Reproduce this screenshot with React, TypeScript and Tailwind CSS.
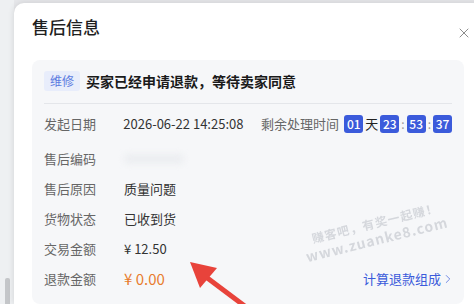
import { X, ChevronRight } from 'lucide-react';

const rows = [
  { label: "售后编码", value: "" },
  { label: "售后原因", value: "质量问题" },
  { label: "货物状态", value: "已收到货" },
  { label: "交易金额", value: "¥ 12.50" },
];

function TimeBox({ v }: { v: string }) {
  return (
    <span className="inline-flex items-center justify-center w-[19px] h-[18px] rounded-[3px] bg-[#3b5bdb] text-white text-[12px] font-medium">
      {v}
    </span>
  );
}

export default function App() {
  return (
    <div
      className="relative w-[474px] h-[304px] overflow-hidden bg-[#e6e7ea] flex"
      style={{ fontFamily: '"Noto Sans CJK SC", "Noto Sans", sans-serif' }}
    >
      {/* 左侧背景 + 滚动条 */}
      <div className="w-[14px] shrink-0 flex flex-col items-center bg-[#eef0f2]">
        <div className="flex-1" />
        <div className="w-[5px] h-[26px] bg-[#c4c6c9] rounded-t-[2px]" />
      </div>

      {/* 弹窗 */}
      <div className="w-[480px] shrink-0 mt-[3px] bg-white rounded-tl-[10px] shadow-[0_0_6px_rgba(0,0,0,0.12)] pl-[18px] pr-[30px] flex flex-col">
        <div className="h-[57px] flex justify-between">
          <span className="mt-[11px] text-[17px] leading-[26px] font-medium text-[#1f1f1f]">售后信息</span>
          <X className="mt-[22px] w-[16px] h-[16px] text-[#8c8c8c] -mr-[8px]" strokeWidth={1.5} />
        </div>

        {/* 信息卡片 */}
        <div className="flex-1 bg-[#f6f7f9] rounded-[8px] px-[12px] pt-[11px]">
          <div className="flex items-center gap-[6px] h-[20px]">
            <span className="h-[20px] px-[6px] flex items-center rounded-[3px] bg-[#e8edfb] text-[#5b7be0] text-[12px]">
              维修
            </span>
            <span className="text-[14px] font-bold text-[#1a1a1a]">
              买家已经申请退款，等待卖家同意
            </span>
          </div>
          <div className="mt-[12px] h-px bg-[#e4e6ea]" />

          <div className="h-[40px] flex items-center text-[13px]">
            <span className="w-[80px] text-[#666]">发起日期</span>
            <span className="w-[139px] text-[#333]">2026-06-22 14:25:08</span>
            <span className="w-[84px] text-[#666]">剩余处理时间</span>
            <div className="flex items-center gap-[2px] text-[#222]">
              <TimeBox v="01" />
              <span className="text-[13px]">天</span>
              <TimeBox v="23" />
              <span className="text-[#999] text-[12px]">:</span>
              <TimeBox v="53" />
              <span className="text-[#999] text-[12px]">:</span>
              <TimeBox v="37" />
            </div>
          </div>

          {rows.map((r) => (
            <div key={r.label} className="h-[30px] flex items-center text-[13px]">
              <span className="w-[80px] text-[#666]">{r.label}</span>
              {r.value ? (
                <span className="text-[#333]">{r.value}</span>
              ) : (
                <span className="w-[60px] h-[10px] rounded bg-[#eceef1] blur-[3px]" />
              )}
            </div>
          ))}

          <div className="h-[30px] flex items-center text-[13px]">
            <span className="w-[80px] text-[#666]">退款金额</span>
            <span className="text-[15px] text-[#e87c2e]">¥ 0.00</span>
            <span className="ml-auto flex items-center text-[#3b5bdb] text-[13px]">
              计算退款组成
              <ChevronRight className="w-[14px] h-[14px] -mr-[3px]" strokeWidth={1.2} />
            </span>
          </div>
        </div>
      </div>

      {/* 水印 */}
      <div className="absolute left-[302px] top-[214px] -rotate-[14deg] text-[#cdd0d6] opacity-80 leading-[17px] pointer-events-none">
        <div className="text-[12px] font-bold tracking-[1px] pl-[10px]">赚客吧，有奖一起赚！</div>
        <div className="text-[14px] font-bold tracking-[1px]">www.zuanke8.com</div>
      </div>

      {/* 红色箭头 */}
      <svg className="absolute left-0 top-0" width="474" height="304" viewBox="0 0 474 304">
        <line x1="250" y1="310" x2="202" y2="274" stroke="#e8433b" strokeWidth="5" strokeLinecap="round" />
        <polygon points="190,262 217,268 200,288" fill="#e8433b" />
      </svg>
    </div>
  );
}
